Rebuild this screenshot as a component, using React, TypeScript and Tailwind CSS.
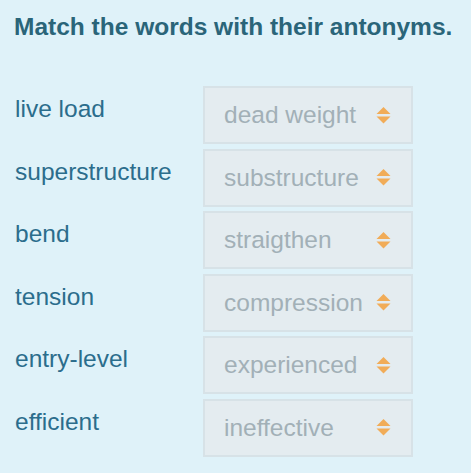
const pairs = [
  { word: 'live load', answer: 'dead weight' },
  { word: 'superstructure', answer: 'substructure' },
  { word: 'bend', answer: 'straigthen' },
  { word: 'tension', answer: 'compression' },
  { word: 'entry-level', answer: 'experienced' },
  { word: 'efficient', answer: 'ineffective' },
]

function SortArrows() {
  return (
    <svg width="15" height="17" viewBox="0 0 15 17" className="shrink-0">
      <path d="M7.5 0 L14.5 7 L0.5 7 Z" fill="#f1ac58" />
      <path d="M0.5 9.5 L14.5 9.5 L7.5 16.5 Z" fill="#f1ac58" />
    </svg>
  )
}

export default function App() {
  return (
    <div className="min-h-screen w-[471px] h-[473px] bg-[#dff2f9] font-['Liberation_Sans',Arial,sans-serif] px-[14px] pt-[13px]">
      <h1 className="text-[24.5px] leading-[28px] font-bold text-[#2a6579]">
        Match the words with their antonyms.
      </h1>
      <div className="mt-[45px] flex flex-col gap-[4.5px]">
        {pairs.map((pair) => (
          <div key={pair.word} className="flex items-start">
            <p className="w-[189px] pl-[1px] mt-[9px] text-[24.5px] leading-[28px] text-[#2b6d8c]">{pair.word}</p>
            <div className="w-[210px] h-[58px] border-2 border-[#d7e2e7] bg-[#e4ecf0] flex items-center justify-between pl-[19px] pr-[20px]">
              <span className="text-[24.5px] leading-[28px] text-[#a2b0b7]">{pair.answer}</span>
              <SortArrows />
            </div>
          </div>
        ))}
      </div>
    </div>
  )
}
